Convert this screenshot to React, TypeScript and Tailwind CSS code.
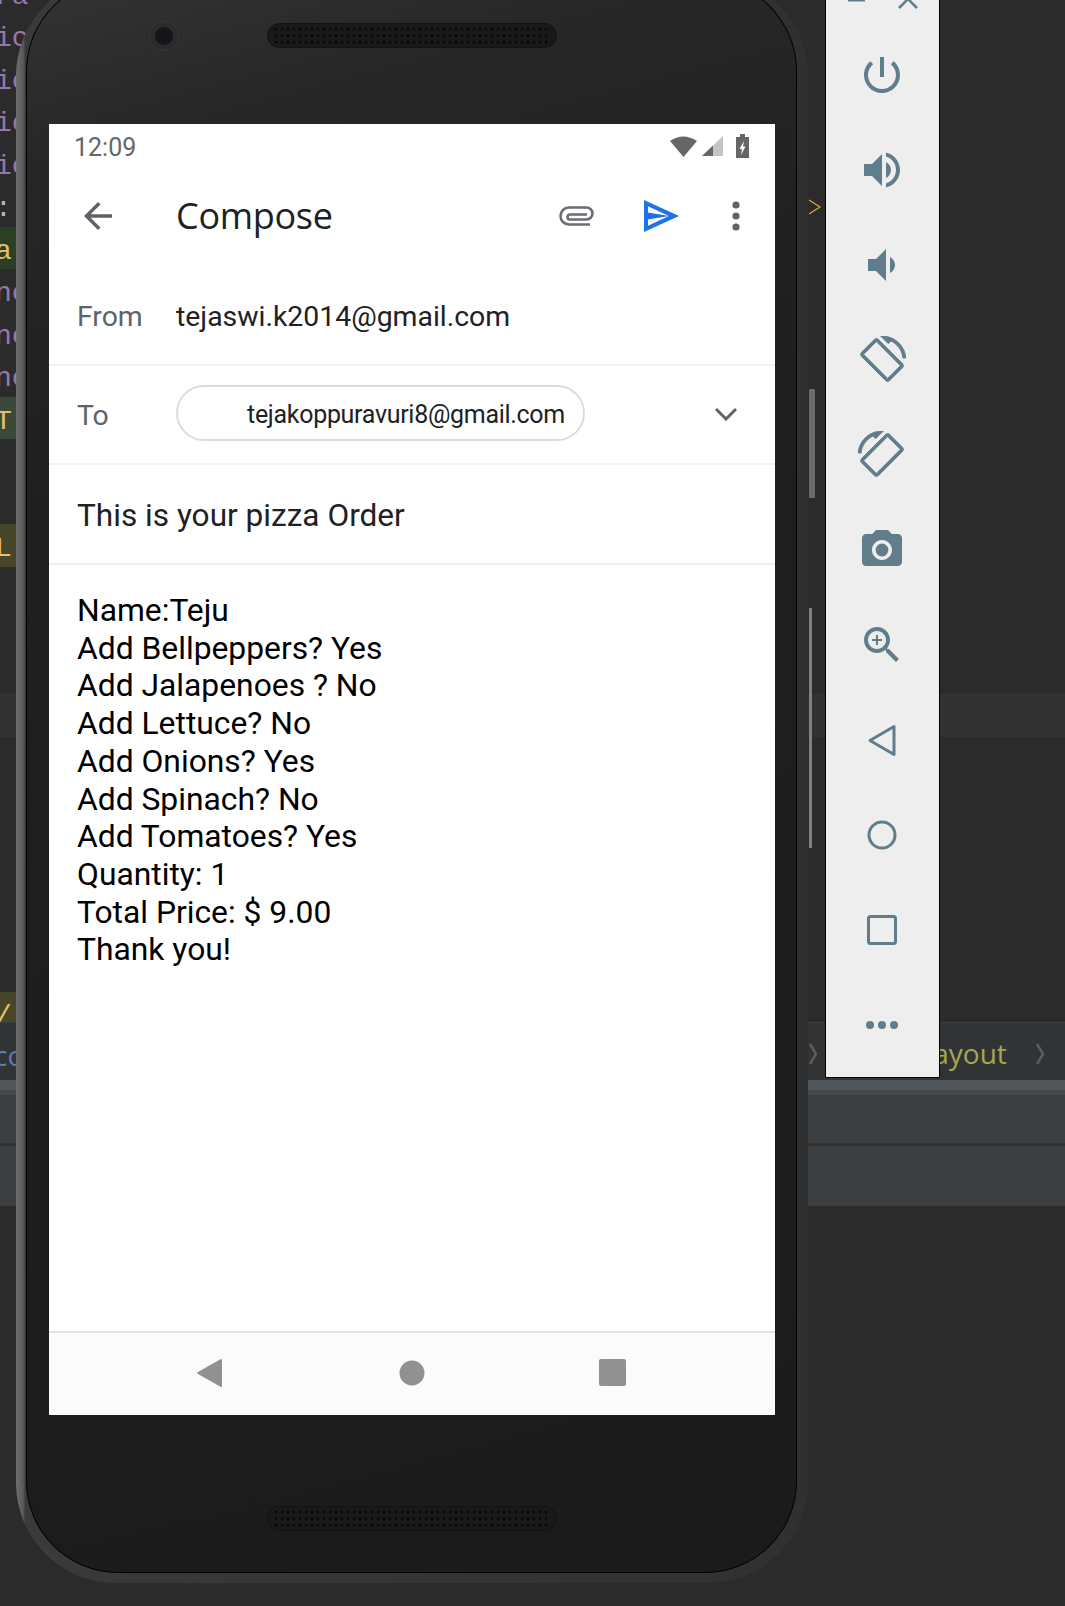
const C = "#607d8b";

function Speaker({ id }: { id: string }) {
  return (
    <div className="w-[290px] h-[25px] rounded-full bg-[#191919] border border-[#121212] overflow-hidden px-[5px] py-[2px]">
      <svg width="278" height="19" className="block">
        <defs>
          <pattern id={id} width="6" height="6.6" patternUnits="userSpaceOnUse">
            <circle cx="3" cy="3" r="1.25" fill="#050505" />
          </pattern>
        </defs>
        <rect width="278" height="19" fill={`url(#${id})`} />
      </svg>
    </div>
  );
}

function MI({ d, flip, extra, bold }: { d: string; flip?: boolean; extra?: React.ReactNode; bold?: boolean }) {
  return (
    <svg width="48" height="48" viewBox="0 0 24 24" fill={C} className="block">
      <g transform={flip ? "translate(24,0) scale(-1,1)" : undefined}>
        <path d={d} stroke={bold ? C : undefined} strokeWidth={bold ? 0.45 : undefined} />
        {extra}
      </g>
    </svg>
  );
}

const rotate =
  "M16.48 2.52c3.27 1.55 5.61 4.72 5.97 8.48h1.5C23.44 4.84 18.29 0 12 0l-.66.03 3.81 3.81 1.33-1.32zm-6.25-.77c-.59-.59-1.54-.59-2.12 0L1.75 8.11c-.59.59-.59 1.54 0 2.12l12.02 12.02c.59.59 1.54.59 2.12 0l6.36-6.36c.59-.59.59-1.54 0-2.12L10.23 1.75zm4.6 19.44L2.81 9.17l6.36-6.36 12.02 12.02-6.36 6.36z";

function Toolbar() {
  return (
    <div className="ml-[17px] w-[115px] h-[1078px] bg-[#eeeeee] border-l border-r border-b border-black flex flex-col items-center shrink-0 pr-[2px]">
      <div className="h-[10px] w-full overflow-hidden pl-[22px] flex items-start">
        <svg width="70" height="10" className="block">
          <path d="M0 0.5H17" stroke={C} strokeWidth="2" />
          <path d="M51 8L60 -1L69 8" stroke={C} strokeWidth="2.5" fill="none" />
        </svg>
      </div>
      <div className="mt-[41px] flex flex-col gap-[47px]">
        <MI d="M13 3h-2v10h2V3zm4.83 2.17l-1.42 1.42C17.99 7.86 19 9.81 19 12c0 3.87-3.13 7-7 7s-7-3.13-7-7c0-2.19 1.01-4.14 2.58-5.42L6.17 5.17C4.23 6.82 3 9.26 3 12c0 4.97 4.03 9 9 9s9-4.03 9-9c0-2.74-1.23-5.18-3.17-6.83z" />
        <MI d="M3 9v6h4l5 5V4L7 9H3zm13.5 3c0-1.77-1.02-3.29-2.5-4.03v8.05c1.48-.73 2.5-2.25 2.5-4.02zM14 3.23v2.06c2.89.86 5 3.54 5 6.71s-2.11 5.85-5 6.71v2.06c4.01-.91 7-4.49 7-8.77s-2.99-7.86-7-8.77z" />
        <MI d="M18.5 12c0-1.77-1.02-3.29-2.5-4.03v8.05c1.48-.73 2.5-2.25 2.5-4.02zM5 9v6h4l5 5V4L9 9H5z" />
        <MI d={rotate} bold />
        <MI d={rotate} flip bold />
        <MI
          d="M9 2L7.17 4H4c-1.1 0-2 .9-2 2v12c0 1.1.9 2 2 2h16c1.1 0 2-.9 2-2V6c0-1.1-.9-2-2-2h-3.17L15 2H9zm3 15c-2.76 0-5-2.24-5-5s2.24-5 5-5 5 2.24 5 5-2.24 5-5 5z"
          extra={<circle cx="12" cy="12" r="3.2" />}
        />
        <MI
          d="M15.5 14h-.79l-.28-.27C15.41 12.59 16 11.11 16 9.5 16 5.91 13.09 3 9.5 3S3 5.91 3 9.5 5.91 16 9.5 16c1.61 0 3.09-.59 4.23-1.57l.27.28v.79l5 4.99L20.49 19l-4.99-5zm-6 0C7.01 14 5 11.99 5 9.5S7.01 5 9.5 5 14 7.01 14 9.5 11.99 14 9.5 14z"
          extra={<path d="M12 10h-2v2H9v-2H7V9h2V7h1v2h2v1z" />}
        />
        <svg width="48" height="48" className="block">
          <path d="M36 10.5V38.5L12 24.5Z" fill="none" stroke={C} strokeWidth="3" strokeLinejoin="round" />
        </svg>
        <svg width="48" height="48" className="block">
          <circle cx="24" cy="24" r="13" fill="none" stroke={C} strokeWidth="3" />
        </svg>
        <svg width="48" height="48" className="block">
          <rect x="10.5" y="10.5" width="27" height="27" rx="2" fill="none" stroke={C} strokeWidth="3" />
        </svg>
        <svg width="48" height="48" className="block">
          <circle cx="12" cy="24" r="4" fill={C} />
          <circle cx="24" cy="24" r="4" fill={C} />
          <circle cx="36" cy="24" r="4" fill={C} />
        </svg>
      </div>
    </div>
  );
}

function StatusBar() {
  return (
    <div className="h-[46px] flex items-center pl-[25px] pr-[26px] shrink-0">
      <span className="text-[25px] leading-none text-[#666666]">12:09</span>
      <svg width="79" height="24" className="block ml-auto -mt-[2px]" viewBox="0 0 79 24">
        <path d="M0 7Q13 -2 27 7L13.5 23Z" fill="#666666" />
        <path d="M32 22L53 2V22Z" fill="#c4c4c4" />
        <path d="M32 22L43 11.5V22Z" fill="#666666" />
        <path d="M70 0H75V3H79V24H66V3H70Z" fill="#666666" />
        <path d="M74 7L69.5 15H72L71 21L75.5 12.5H73Z" fill="#ffffff" />
      </svg>
    </div>
  );
}

function AppBar() {
  return (
    <div className="h-[92px] flex items-center pl-[28px] pr-[35px] shrink-0">
      <svg width="42" height="42" viewBox="0 0 24 24" fill="#5f6368" className="block shrink-0">
        <path d="M20 11H7.83l5.59-5.59L12 4l-8 8 8 8 1.41-1.41L7.83 13H20v-2z" />
      </svg>
      <span className="ml-[57px] text-[36px] leading-none text-[#202124] [font-family:'Open_Sans',sans-serif] tracking-[-0.3px]">
        Compose
      </span>
      <svg width="36" height="20" viewBox="0 0 36 20" className="block ml-auto shrink-0" fill="none" stroke="#6a6d71" strokeWidth="2.6">
        <path d="M31 18.5H10A8.5 8.5 0 0 1 10 1.5H27.5A6 6 0 0 1 27.5 13.5H11A2.5 2.5 0 0 1 11 8.5H28" />
      </svg>
      <svg width="35" height="32" viewBox="0 0 35 32" fill="#1a73e8" fillRule="evenodd" className="block ml-[49px] shrink-0">
        <path d="M0 0L35 16L0 32ZM4 6.2V12.5L25 16ZM4 25.8L25 16L4 19.5Z" />
      </svg>
      <svg width="8" height="32" className="block ml-[53px] shrink-0" fill="#5f6368">
        <circle cx="4" cy="5" r="3.6" />
        <circle cx="4" cy="16" r="3.6" />
        <circle cx="4" cy="27" r="3.6" />
      </svg>
    </div>
  );
}

const bodyLines = [
  "Name:Teju",
  "Add Bellpeppers? Yes",
  "Add Jalapenoes ? No",
  "Add Lettuce? No",
  "Add Onions? Yes",
  "Add Spinach? No",
  "Add Tomatoes? Yes",
  "Quantity: 1",
  "Total Price: $ 9.00",
  "Thank you!",
];

function Screen() {
  return (
    <div className="w-[726px] h-[1291px] bg-white flex flex-col [font-family:Roboto,sans-serif]">
      <StatusBar />
      <AppBar />
      <div className="h-[96px] pt-[6px] flex items-center border-b-2 border-[#f1f3f4] box-content shrink-0 pl-[28px]">
        <span className="w-[99px] text-[28.4px] text-[#5f6368] leading-none mt-[2px]">From</span>
        <span className="text-[28.4px] text-[#202124] leading-none mt-[2px]">tejaswi.k2014@gmail.com</span>
      </div>
      <div className="h-[97px] flex items-center border-b-2 border-[#f1f3f4] box-content shrink-0 pl-[28px] pr-[38px]">
        <span className="w-[99px] text-[28.4px] text-[#5f6368] leading-none mt-[3px]">To</span>
        <div className="w-[409px] h-[56px] rounded-full border-2 border-[#dadce0] flex items-center pl-[69px] -mt-[3px]">
          <span className="text-[25px] tracking-[-0.3px] text-[#202124] leading-none mt-[2px]">tejakoppuravuri8@gmail.com</span>
        </div>
        <svg width="22" height="14" className="block ml-auto -mt-[2px]" fill="none" stroke="#5f6368" strokeWidth="3">
          <path d="M1 2L11 12L21 2" />
        </svg>
      </div>
      <div className="h-[98px] flex items-center border-b-2 border-[#eceff1] box-content shrink-0 pl-[28px]">
        <span className="text-[31.6px] text-[#202124] leading-none mt-[3px]">This is your pizza Order</span>
      </div>
      <div className="flex-1 pt-[27px] pl-[28px] text-[31.8px] leading-[37.7px] text-black">
        {bodyLines.map((l) => (
          <div key={l}>{l}</div>
        ))}
      </div>
      <div className="h-[84px] bg-[#fbfbfb] border-t-2 border-[#e3e3e3] flex items-center pl-[147px] pb-[3px] shrink-0">
        <svg width="26" height="30" className="block">
          <path d="M25 2V28L2 15Z" fill="#919191" stroke="#919191" strokeWidth="2" strokeLinejoin="round" />
        </svg>
        <svg width="26" height="26" className="block ml-[177px]">
          <circle cx="13" cy="13" r="12.5" fill="#919191" />
        </svg>
        <svg width="27" height="27" className="block ml-[174px]">
          <rect width="27" height="27" rx="2" fill="#919191" />
        </svg>
      </div>
    </div>
  );
}

function Phone() {
  return (
    <div className="relative -mt-[24px] w-[792px] h-[1607px] shrink-0 rounded-[100px] bg-[linear-gradient(90deg,#6e6e6e_0%,#5a5a5a_0.9%,#3a3a3a_1.2%,#303030_100%)] pl-[10px] pr-[11px] pt-[3px] pb-[10px]">
      <div className="h-full rounded-[92px] bg-black p-[1px]">
        <div className="h-full rounded-[91px] bg-[linear-gradient(165deg,#343434_0%,#272727_10%,#1f1f1f_30%,#1b1b1b_100%)] pl-[22px] pr-[21px] flex flex-col">
          <div className="h-[144px] shrink-0 flex items-start pt-[43px]">
            <div className="-mt-[2px] ml-[100px] w-[30px] h-[30px] rounded-full bg-[#2b2b2b] border border-[#363636] flex items-center justify-center">
              <div className="w-[18px] h-[18px] rounded-full bg-[#15151a]" />
            </div>
            <div className="ml-[88px]">
              <Speaker id="spk-top" />
            </div>
          </div>
          <Screen />
          <div className="flex-1 flex justify-center items-start pt-[91px] pr-[1px]">
            <Speaker id="spk-bottom" />
          </div>
        </div>
      </div>
      <div className="absolute left-[793px] top-[413px] w-[6px] h-[109px] bg-[#6b6b6b] rounded-[1px]" />
      <div className="absolute left-[793px] top-[632px] w-[3px] h-[240px] bg-[#808080]" />
    </div>
  );
}

type Row = { t?: string; c?: string; b?: string };
const rows: Row[] = [
  { t: "ra", c: "text-[#9876aa]" },
  { t: "ic", c: "text-[#9876aa]" },
  { t: "ic", c: "text-[#9876aa]" },
  { t: "ic", c: "text-[#9876aa]" },
  { t: "ic", c: "text-[#9876aa]" },
  { t: ": ", c: "text-[#a9b7c6]" },
  { t: "a.", c: "text-[#e8bf6a]", b: "w-[16px] bg-[#2a3f23]" },
  { t: "nc", c: "text-[#9876aa]" },
  { t: "nc", c: "text-[#9876aa]" },
  { t: "nc", c: "text-[#9876aa]" },
  { t: "T.", c: "text-[#e8bf6a]", b: "w-[16px] bg-[#3a4a3a]" },
  {},
  {},
  { t: "L", c: "text-[#e8bf6a]", b: "w-[16px] bg-[#47452a]" },
  {},
  {},
  {},
  { b: "bg-[#323232]" },
  {},
  {},
  {},
  {},
  {},
  {},
  { t: "/", c: "text-[#e8bf6a]", b: "w-[16px] bg-[#47452a]" },
];

function Ide() {
  return (
    <div className="absolute inset-0 flex flex-col bg-[#2b2b2b]">
      <div className="h-[1022px] overflow-hidden shrink-0">
        <div className="-mt-[28.5px] [font-family:'Liberation_Mono',monospace] text-[28px]">
          {rows.map((r, i) => (
            <div key={i} className={`h-[42.5px] pt-[8px] leading-[34.5px] ${r.b ?? ""}`}>
              <span className={`block -ml-[5px] ${r.c ?? ""}`}>{r.t}</span>
            </div>
          ))}
        </div>
      </div>
      <div className="h-[58px] shrink-0 bg-[#313335] border-t border-[#3a3d3f] flex items-center [font-family:'Open_Sans',sans-serif] text-[28px]">
        <span className="-ml-[6px] text-[#5a7db5] mt-[6px]">co</span>
        <svg width="8" height="22" className="block ml-[785px] mt-[4px]" fill="none" stroke="#5b5f61" strokeWidth="2.5">
          <path d="M1 1L7 11L1 21" />
        </svg>
        <span className="ml-[116px] text-[#a5a84f] mt-[2px]">ayout</span>
        <svg width="8" height="22" className="block ml-[29px] mt-[4px]" fill="none" stroke="#5b5f61" strokeWidth="2.5">
          <path d="M1 1L7 11L1 21" />
        </svg>
      </div>
      <div className="h-[10px] shrink-0 bg-[#50565a]" />
      <div className="h-[5px] shrink-0 bg-[#45494b]" />
      <div className="h-[48px] shrink-0 bg-[#3c3f41]" />
      <div className="h-[3px] shrink-0 bg-[#303234]" />
      <div className="h-[60px] shrink-0 bg-[#3c3f41]" />
    </div>
  );
}

export default function App() {
  return (
    <div className="relative w-[1065px] h-[1606px] overflow-hidden bg-[#2b2b2b]">
      <Ide />
      <div className="relative flex items-start pl-[16px]">
        <Phone />
        <svg width="14" height="16" className="block mt-[199px] absolute left-[808px]" fill="none" stroke="#e0a83e" strokeWidth="1.2">
          <path d="M1 1L12 8L1 15" />
        </svg>
        <Toolbar />
      </div>
    </div>
  );
}
